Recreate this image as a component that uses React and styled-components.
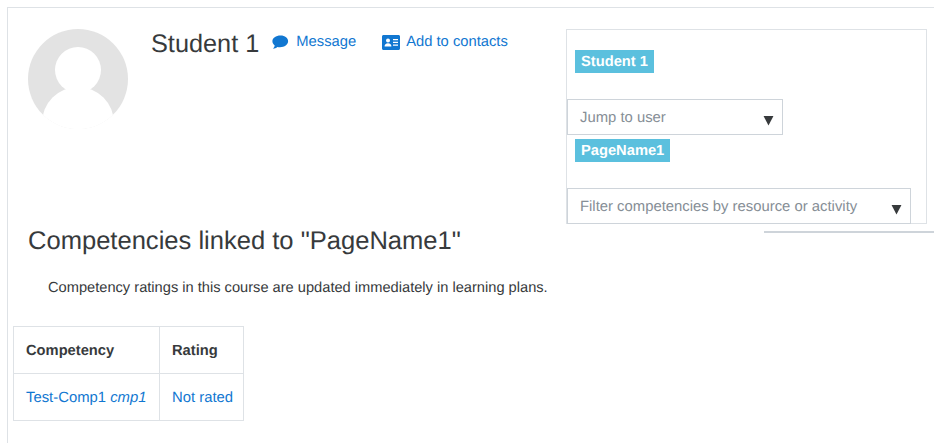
import React from "react";
import styled, { createGlobalStyle } from "styled-components";

const Global = createGlobalStyle`
  html, body { margin: 0; padding: 0; background: #fff; }
  body { font-family: "Liberation Sans", Arial, sans-serif; font-size: 15px; color: #373a3c; overflow: hidden; text-rendering: geometricPrecision; }
`;
const Page = styled.div`
  width: 934px; height: 443px; box-sizing: border-box; padding: 7px 0 0 7px; overflow: hidden;
`;
const Card = styled.main`
  height: 436px; box-sizing: border-box; border-top: 1px solid #dee2e6; border-left: 1px solid #dee2e6;
  padding: 21px 0 0 5px;
`;
const Top = styled.div`
  display: flex; align-items: flex-start; padding-right: 7px;
`;
const UserHead = styled.div`
  display: flex; align-items: flex-start; flex: 1; padding-left: 15px;
`;
const Avatar = styled.svg`
  width: 100px; height: 100px; flex: none; display: block;
`;
const Name = styled.h2`
  margin: 0 0 0 23px; font-size: 25.3px; line-height: 30px; font-weight: 400; color: #373a3c;
`;
const HeadLink = styled.a`
  display: inline-flex; align-items: center; gap: ${p => p.$iconGap}px; margin-top: 4px; color: #1177d1; font-size: 14.75px; line-height: 18px; text-decoration: none;
  margin-left: ${p => p.$gap}px; white-space: nowrap;
`;
const Panel = styled.aside`
  width: 361px; height: 195px; flex: none; box-sizing: border-box; border: 1px solid #dee2e6;
  display: flex; flex-direction: column; align-items: flex-start;
`;
const Badge = styled.span`
  display: block; margin: ${p => p.$top}px 0 0 8px; padding: 1px 6px 0; box-sizing: border-box; height: 23px; line-height: 23px; background: #5bc0de; color: #fff; font-weight: 700; font-size: 14.7px; white-space: nowrap;
`;
const Select = styled.div`
  margin: ${p => p.$top}px 0 0 0; width: ${p => p.$w}px; height: 36px; flex: none; box-sizing: border-box; border: 1px solid #ced4da;
  display: flex; align-items: center; justify-content: space-between; padding: 2px 8px 0 12px; color: #868e96; font-size: 14.85px; background: #fff;
`;
const Arrow = styled.svg`
  width: 11px; height: 11px; flex: none; margin-top: 4px;
`;
const Rule = styled.div`
  width: 170px; height: 2px; background: #ced4da; margin: 7px 0 0 auto;
`;
const Heading = styled.h3`
  margin: -7px 0 0 15px; font-size: 25.55px; line-height: 30px; font-weight: 400; color: #373a3c;
`;
const Note = styled.p`
  margin: 23px 0 0 35px; font-size: 14.65px; line-height: 18px; color: #373a3c;
`;
const Table = styled.table`
  border-collapse: collapse; margin: 29px 0 0 0; font-size: 14.85px;
`;
const Th = styled.th`
  border: 1px solid #dee2e6; padding: 1px 12px 0; height: 47px; box-sizing: border-box; text-align: left; font-weight: 700; font-size: 14.7px; color: #373a3c; width: ${p => p.$w}px;
  &:last-child { padding-right: 10px; }
`;
const Td = styled.td`
  border: 1px solid #dee2e6; padding: 1px 12px 0; height: 47px; box-sizing: border-box; color: #1177d1; white-space: nowrap;
  &:last-child { padding-right: 10px; }
`;
const Code = styled.em`font-style: italic;`;

const SelectArrow = () => (
  <Arrow viewBox="0 0 10 10"><path d="M0.500 1h9L5 9.500z" fill="#373a3c" /></Arrow>
);

export default function App() {
  return (
    <Page>
      <Global />
      <Card>
        <Top>
          <UserHead>
            <Avatar viewBox="0 0 100 100">
              <defs><clipPath id="c"><circle cx="50" cy="50" r="50" /></clipPath></defs>
              <circle cx="50" cy="50" r="50" fill="#e3e3e3" />
              <g clipPath="url(#c)">
                <circle cx="50" cy="41" r="23" fill="#fff" />
                <ellipse cx="50" cy="94" rx="36" ry="36" fill="#fff" />
                <rect x="0" y="86" width="100" height="14" fill="#fff" />
              </g>
            </Avatar>
            <Name>Student 1</Name>
            <HeadLink href="#" $gap={13} $iconGap={7}>
              <svg width="17" height="15" viewBox="0 0 17 15"><path d="M8.500 0.500C3.900 0.500 0.400 3 0.400 6.300c0 1.700.9 3.100 2.300 4.100-.2 1.300-.9 2.400-1.700 3.300 1.600-.1 3.200-.8 4.400-1.800.8.200 1.700.300 2.600.300 4.600 0 8.100-2.600 8.100-5.900S13.100.500 8.500.500z" fill="#1177d1" /></svg>
              Message
            </HeadLink>
            <HeadLink href="#" $gap={26} $iconGap={6}>
              <svg width="18" height="15" viewBox="0 0 18 15"><path fillRule="evenodd" d="M1.500 0h15C17.300 0 18 .700 18 1.500v12c0 .800-.700 1.500-1.500 1.500h-15C.7 15 0 14.300 0 13.500v-12C0 .7.700 0 1.500 0zM6 3.500a2 2 0 1 0 0 4 2 2 0 0 0 0-4zM2.600 11.500h6.800c.2-1.800-1.300-3.300-3.400-3.300s-3.600 1.500-3.400 3.300zM11 4v1.200h5V4zM11 6.800v1.200h5V6.800zM11 9.500v1.200h5V9.500z" fill="#1177d1" /></svg>
              Add to contacts
            </HeadLink>
          </UserHead>
          <Panel>
            <Badge $top={20}>Student 1</Badge>
            <Select $top={26} $w={216}>Jump to user<SelectArrow /></Select>
            <Badge $top={4}>PageName1</Badge>
            <Select $top={26} $w={344}>Filter competencies by resource or activity<SelectArrow /></Select>
          </Panel>
        </Top>
        <Rule />
        <Heading>Competencies linked to "PageName1"</Heading>
        <Note>Competency ratings in this course are updated immediately in learning plans.</Note>
        <Table>
          <thead><tr><Th $w={146}>Competency</Th><Th $w={83}>Rating</Th></tr></thead>
          <tbody><tr><Td>Test-Comp1 <Code>cmp1</Code></Td><Td>Not rated</Td></tr></tbody>
        </Table>
      </Card>
    </Page>
  );
}
